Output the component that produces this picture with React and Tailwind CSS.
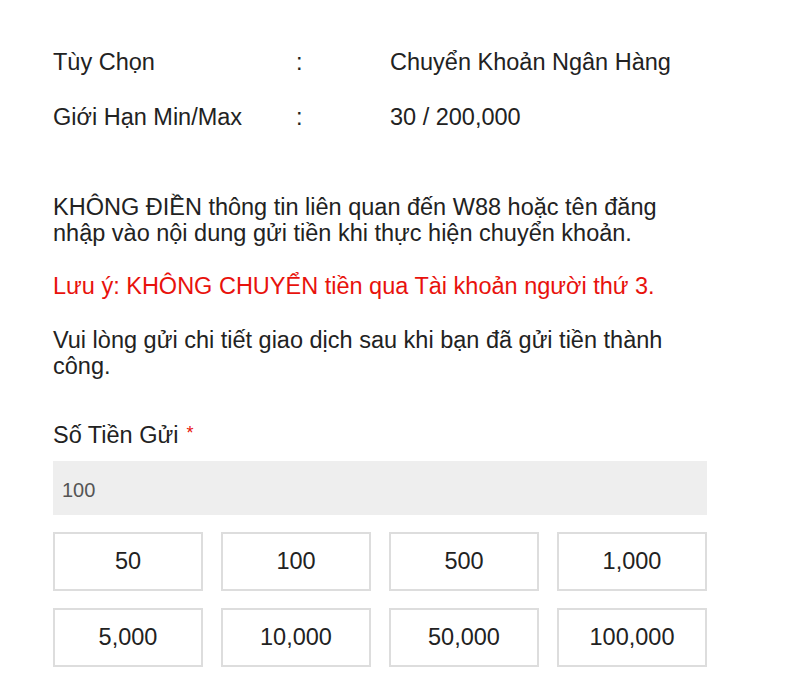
import React from 'react';

const amounts = ['50', '100', '500', '1,000', '5,000', '10,000', '50,000', '100,000'];

export default function App() {
  return (
    <div className="w-[800px] h-[678px] bg-white text-[#222] font-['Liberation_Sans',Arial,sans-serif] text-[23.5px] pl-[53px] pr-[93px] pt-[49px]">
      <div className="flex items-center h-[27px]">
        <span className="w-[243px]">Tùy Chọn</span>
        <span className="w-[94px]">:</span>
        <span>Chuyển Khoản Ngân Hàng</span>
      </div>
      <div className="flex items-center h-[27px] mt-[28px]">
        <span className="w-[243px]">Giới Hạn Min/Max</span>
        <span className="w-[94px]">:</span>
        <span>30 / 200,000</span>
      </div>

      <p className="mt-[63px] leading-[26px] w-[640px]">
        KHÔNG ĐIỀN thông tin liên quan đến W88 hoặc tên đăng nhập vào nội dung gửi tiền khi thực hiện chuyển khoản.
      </p>
      <p className="mt-[27px] leading-[26px] text-[#e8120c]">
        Lưu ý: KHÔNG CHUYỂN tiền qua Tài khoản người thứ 3.
      </p>
      <p className="mt-[28px] leading-[26px] w-[640px]">
        Vui lòng gửi chi tiết giao dịch sau khi bạn đã gửi tiền thành công.
      </p>

      <div className="mt-[43px] leading-[26px] flex items-start">
        <span>Số Tiền Gửi</span>
        <span className="text-[#e8120c] text-[18px] leading-[18px] ml-[8px] mt-[2px]">*</span>
      </div>

      <div className="mt-[13px] h-[54px] bg-[#eeeeee] flex items-center px-[9px] pt-[3px] text-[20px] text-[#555]">
        100
      </div>

      <div className="mt-[17px] grid grid-cols-4 gap-x-[18px] gap-y-[17px] w-[654px]">
        {amounts.map((a) => (
          <div
            key={a}
            className="h-[59px] border-2 border-[#dddddd] flex items-center justify-center"
          >
            {a}
          </div>
        ))}
      </div>
    </div>
  );
}
